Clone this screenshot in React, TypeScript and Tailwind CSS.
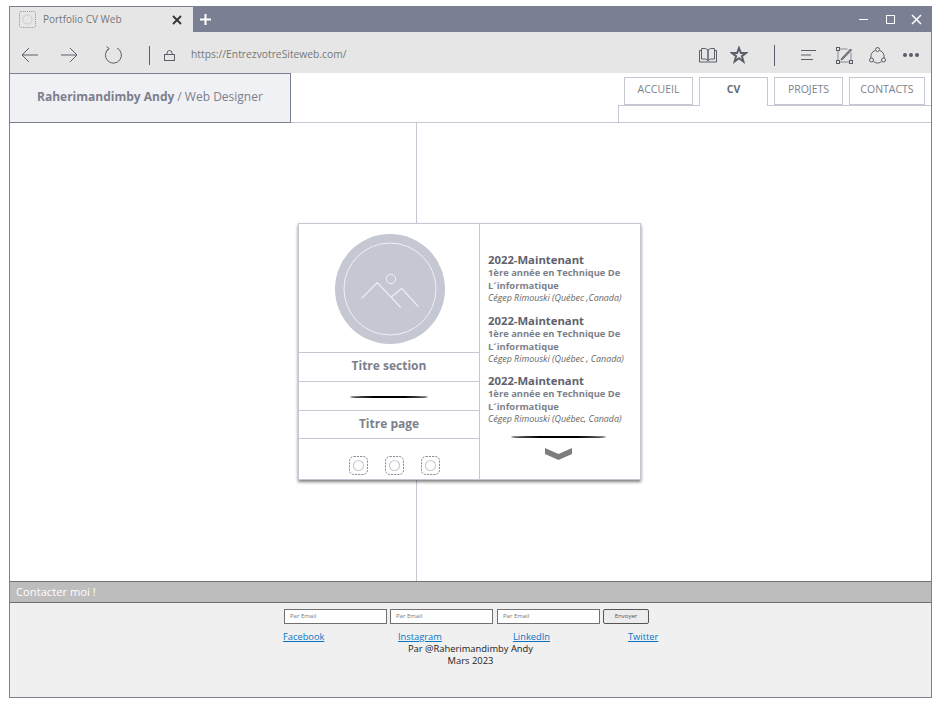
const ff = "font-['Open_Sans',sans-serif]";

function PlaceholderGlyph({ size = 19, rounded = 4, dash = "2 1" }: { size?: number; rounded?: number; dash?: string }) {
  return (
    <svg width={size} height={size} viewBox="0 0 18 18" fill="none">
      <rect x="0.500" y="0.500" width="17" height="17" rx={rounded} stroke="#70737f" strokeWidth="0.800" strokeDasharray={dash} />
      <circle cx="9" cy="9" r="4.800" fill="none" stroke="#c5c8d2" strokeWidth="1" />
    </svg>
  );
}

function ChromeIcons() {
  return (
    <div className="flex items-center">
      {/* reading view */}
      <svg width="18" height="16" viewBox="0 0 18 16" fill="none" stroke="#5a5e6a" strokeWidth="1">
        <path d="M2.500 1.500h4l2.500 1.500v10.500l-2.500-1.500h-4z M15.500 1.500h-4l-2.500 1.500v10.500l2.500-1.500h4z M2.500 3.500h-2v11.500h17v-11.500h-2" />
      </svg>
      {/* favorite */}
      <svg width="18" height="18" viewBox="0 0 18 18" fill="none" stroke="#5a5e6a" strokeWidth="2" className="ml-[13px]">
        <path d="M9 2l1.900 5h5.100l-4.100 3.200 1.500 5.300-4.400-3.200-4.400 3.200 1.500-5.300-4.100-3.200h5.100z" />
      </svg>
      <div className="ml-[26px] h-[21px] w-px bg-[#5a5e6a]" />
      {/* hub */}
      <svg width="16" height="12" viewBox="0 0 16 12" fill="none" stroke="#5a5e6a" strokeWidth="1" className="ml-[26px]">
        <path d="M0 1.500h15 M0 6h10 M0 10.500h12" />
      </svg>
      {/* web note */}
      <svg width="17" height="17" viewBox="0 0 17 17" fill="none" stroke="#5a5e6a" strokeWidth="1" className="ml-[19px]">
        <rect x="0.500" y="0.500" width="3" height="3" />
        <rect x="0.500" y="13.500" width="3" height="3" />
        <rect x="13.500" y="13.500" width="3" height="3" />
        <path d="M3.500 2h8 M2 3.500v10 M3.500 15h10 M15 13.500v-8" strokeWidth="0.700" />
        <path d="M5.500 11.500l9-9.500 1 1-9 9.500-1.500 0.300z" fill="#8a8d98" />
      </svg>
      {/* share */}
      <svg width="17" height="17" viewBox="0 0 17 17" fill="none" stroke="#5a5e6a" strokeWidth="1" className="ml-[16px]">
        <path d="M6 3.500a6.500 6.500 0 0 0-4 7.500 M11 3.500a6.500 6.500 0 0 1 4 7.500 M4.500 14.500a6.500 6.500 0 0 0 8 0" />
        <circle cx="8.500" cy="2.500" r="2" />
        <circle cx="2.500" cy="13" r="2" />
        <circle cx="14.500" cy="13" r="2" />
      </svg>
      {/* more */}
      <div className="ml-[17px] flex gap-[2px]">
        <div className="size-[4px] rounded-full bg-[#5a5e6a]" />
        <div className="size-[4px] rounded-full bg-[#5a5e6a]" />
        <div className="size-[4px] rounded-full bg-[#5a5e6a]" />
      </div>
    </div>
  );
}

function NavTab({ label, active, width }: { label: string; active?: boolean; width: string }) {
  return (
    <div
      className={`${width} flex items-center justify-center border border-[#c5c8d2] bg-white text-[10.500px] ${
        active
          ? "relative z-10 h-[29px] border-b-0 pb-[5px] font-bold text-[#6a6d78]"
          : "h-[28px] pb-[3px] text-[#7c7f8c]"
      }`}
    >
      {label}
    </div>
  );
}

function Entry({ place, gap }: { place: string; gap?: string }) {
  return (
    <div className={gap}>
      <div className="text-[11.300px] leading-[15px] font-bold text-[#5f626d]">2022-Maintenant</div>
      <div className="text-[9.400px] leading-[12.500px] font-bold text-[#7c7f8a]">1ère année en Technique De</div>
      <div className="text-[9.400px] leading-[12.500px] font-bold text-[#7c7f8a]">L´informatique</div>
      <div className="text-[8.900px] leading-[12px] whitespace-nowrap text-[#666] italic">{place}</div>
    </div>
  );
}

function Lens({ width }: { width: string }) {
  return <div className={`${width} mx-auto h-[2px] rounded-[50%] bg-black`} />;
}

function EmailField({ className = "" }: { className?: string }) {
  return (
    <div className={`flex h-[15px] w-[103px] items-center border border-[#707070] bg-white pl-[5px] text-[6px] text-[#777] ${className}`}>
      Par Email
    </div>
  );
}

export default function App() {
  return (
    <div className={`h-[705px] w-[941px] bg-white pt-[6px] pl-[9px] ${ff}`}>
      <div className="flex h-[692px] w-[923px] flex-col border border-[#7a7f93] bg-white">
        {/* title bar */}
        <div className="flex h-[25px] shrink-0 items-center bg-[#7a7f93]">
          <div className="flex h-full w-[183px] items-center bg-[#e6e6e6] pl-[9px]">
            <PlaceholderGlyph size={17} rounded={2} dash="1 1" />
            <span className="ml-[7px] text-[10px] text-[#777]">Portfolio CV Web</span>
            <svg width="10" height="10" viewBox="0 0 10 10" stroke="#333" strokeWidth="1.800" className="ml-[50px]">
              <path d="M1 1l8 8M9 1l-8 8" />
            </svg>
          </div>
          <svg width="11" height="11" viewBox="0 0 11 11" stroke="#fff" strokeWidth="2" className="ml-[7px]">
            <path d="M5.500 0v11M0 5.500h11" />
          </svg>
          <div className="ml-auto flex items-center pr-[9px]">
            <div className="h-px w-[9px] bg-white" />
            <div className="ml-[18px] size-[9px] border border-white" />
            <svg width="11" height="11" viewBox="0 0 11 11" stroke="#fff" strokeWidth="1.500" className="ml-[16px]">
              <path d="M1 1l9 9M10 1l-9 9" />
            </svg>
          </div>
        </div>

        {/* toolbar */}
        <div className="flex h-[41px] shrink-0 items-center bg-[#e6e6e6] pt-[5px] pr-[12px] pl-[11px]">
          <svg width="17" height="16" viewBox="0 0 17 16" fill="none" stroke="#5a5e6a" strokeWidth="1">
            <path d="M17 8H1M8 1L1 8l7 7" />
          </svg>
          <svg width="17" height="16" viewBox="0 0 17 16" fill="none" stroke="#5a5e6a" strokeWidth="1" className="ml-[23px]">
            <path d="M0 8h16M9 1l7 7-7 7" />
          </svg>
          <svg width="18" height="18" viewBox="0 0 18 18" fill="none" stroke="#5a5e6a" strokeWidth="1" className="ml-[26px]">
            <path d="M5 2.500A8 8 0 1 0 13 2 M2.500 0.500L5 2.500 3 5" />
          </svg>
          <div className="ml-[27px] h-[19px] w-px bg-[#5a5e6a]" />
          <svg width="12" height="11" viewBox="0 0 12 11" fill="none" stroke="#5a5e6a" strokeWidth="1" className="ml-[14px]">
            <rect x="0.500" y="4.500" width="10" height="6" />
            <path d="M3 4.500V3a2.500 2.500 0 0 1 5 0v1.500" />
          </svg>
          <span className="ml-[15px] text-[10.300px] text-[#777]">https://EntrezvotreSiteweb.com/</span>
          <div className="ml-auto">
            <ChromeIcons />
          </div>
        </div>

        {/* header */}
        <div className="flex h-[50px] shrink-0 border-b border-[#c5c8d2]">
          <div className="-mb-px flex h-[50px] w-[281px] items-center border-t border-r border-b border-[#7a7f93] bg-[#f0f1f5] pb-[2px] pl-[27px] text-[12px] whitespace-nowrap text-[#7c7f8c]">
            <span className="font-bold">Raherimandimby Andy</span>
            <span className="ml-[3px]">/ Web Designer</span>
          </div>
          <div className="flex-1 pt-[4px]">
            <div className="flex justify-end gap-[6px] pr-[6px]">
              <NavTab label="ACCUEIL" width="w-[69px]" />
              <NavTab label="CV" active width="w-[69px]" />
              <NavTab label="PROJETS" width="w-[69px]" />
              <NavTab label="CONTACTS" width="w-[76px]" />
            </div>
            <div className="ml-auto h-[18px] w-[313px] -translate-y-px border-t border-l border-[#c5c8d2]" />
          </div>
        </div>

        {/* main */}
        <div className="relative flex h-[458px] shrink-0 flex-col items-center pt-[100px]">
          <div className="absolute top-0 bottom-0 left-[406px] w-px bg-[#c5c8d2]" />
          <div className="relative ml-[-2px] flex h-[257px] w-[343px] border border-[#c5c8d2] bg-white shadow-[0px_2px_3px_rgba(0,0,0,0.5)]">
            <div className="flex w-[181px] flex-col border-r border-[#c5c8d2]">
              <div className="flex h-[128px] items-start justify-center pt-[10px] pl-[2px]">
                <svg width="110" height="110" viewBox="0 0 110 110" fill="none">
                  <circle cx="55" cy="55" r="55" fill="#c5c8d2" />
                  <circle cx="55" cy="55" r="46" stroke="#f0f1f5" strokeWidth="1" />
                  <circle cx="56" cy="45" r="4.700" stroke="#f0f1f5" strokeWidth="1" />
                  <path d="M26.700 64.300L42.300 48.700L65.700 73.300 M56.700 62.700L66.700 54.300L83.300 72.700" stroke="#f0f1f5" strokeWidth="1.200" />
                </svg>
              </div>
              <div className="flex h-[30px] items-center justify-center border-y border-[#c5c8d2] pb-[2px] text-[12px] font-bold text-[#7c7f8c]">
                Titre section
              </div>
              <div className="flex h-[28px] items-center pt-[2px]">
                <Lens width="w-[78px]" />
              </div>
              <div className="-ml-px flex h-[29px] items-center justify-center border-y border-l border-[#c5c8d2] pb-[2px] text-[12px] font-bold text-[#7c7f8c]">
                Titre page
              </div>
              <div className="flex flex-1 items-end justify-center gap-[17px] pb-[4px] pl-[10px]">
                <PlaceholderGlyph />
                <PlaceholderGlyph />
                <PlaceholderGlyph />
              </div>
            </div>
            <div className="flex flex-1 flex-col pt-[28px] pl-[8px]">
              <Entry place="Cégep Rimouski (Québec ,Canada)" />
              <Entry place="Cégep Rimouski (Québec , Canada)" gap="mt-[9px]" />
              <Entry place="Cégep Rimouski (Québec, Canada)" gap="mt-[8px]" />
              <div className="mt-[11px] pr-[11px]">
                <Lens width="w-[95px]" />
              </div>
              <svg width="27" height="14" viewBox="0 0 27 14" className="mt-[8px] ml-[57px]">
                <path d="M0 2l13.500 6L27 2v6l-13.500 6L0 8z" fill="#7d7d7d" />
              </svg>
            </div>
          </div>
        </div>

        {/* footer */}
        <div className="flex h-[22px] shrink-0 items-center border-y border-[#707070] bg-[#bdbdbd] pl-[6px] text-[11.200px] text-white">
          Contacter moi !
        </div>
        <div className="flex flex-1 flex-col items-center bg-[#f0f0f0] pt-[6px]">
          <div className="flex items-center gap-[3px] pr-[8px]">
            <EmailField />
            <EmailField />
            <EmailField className="ml-px" />
            <div className="flex h-[15px] w-[46px] items-center justify-center rounded-[2px] border border-[#555] bg-[#ececec] text-[6px] text-[#555]">
              Envoyer
            </div>
          </div>
          <div className="mt-[6px] flex w-full pl-[273px] text-[9.300px] leading-[14px] text-[#0a74c4] underline">
            <span className="w-[115px]">Facebook</span>
            <span className="w-[115px]">Instagram</span>
            <span className="w-[115px]">LinkedIn</span>
            <span>Twitter</span>
          </div>
          <div className="-mt-px text-center text-[9.400px] leading-[12px] text-[#222]">
            <div>Par @Raherimandimby Andy</div>
            <div>Mars 2023</div>
          </div>
        </div>
      </div>
    </div>
  );
}
